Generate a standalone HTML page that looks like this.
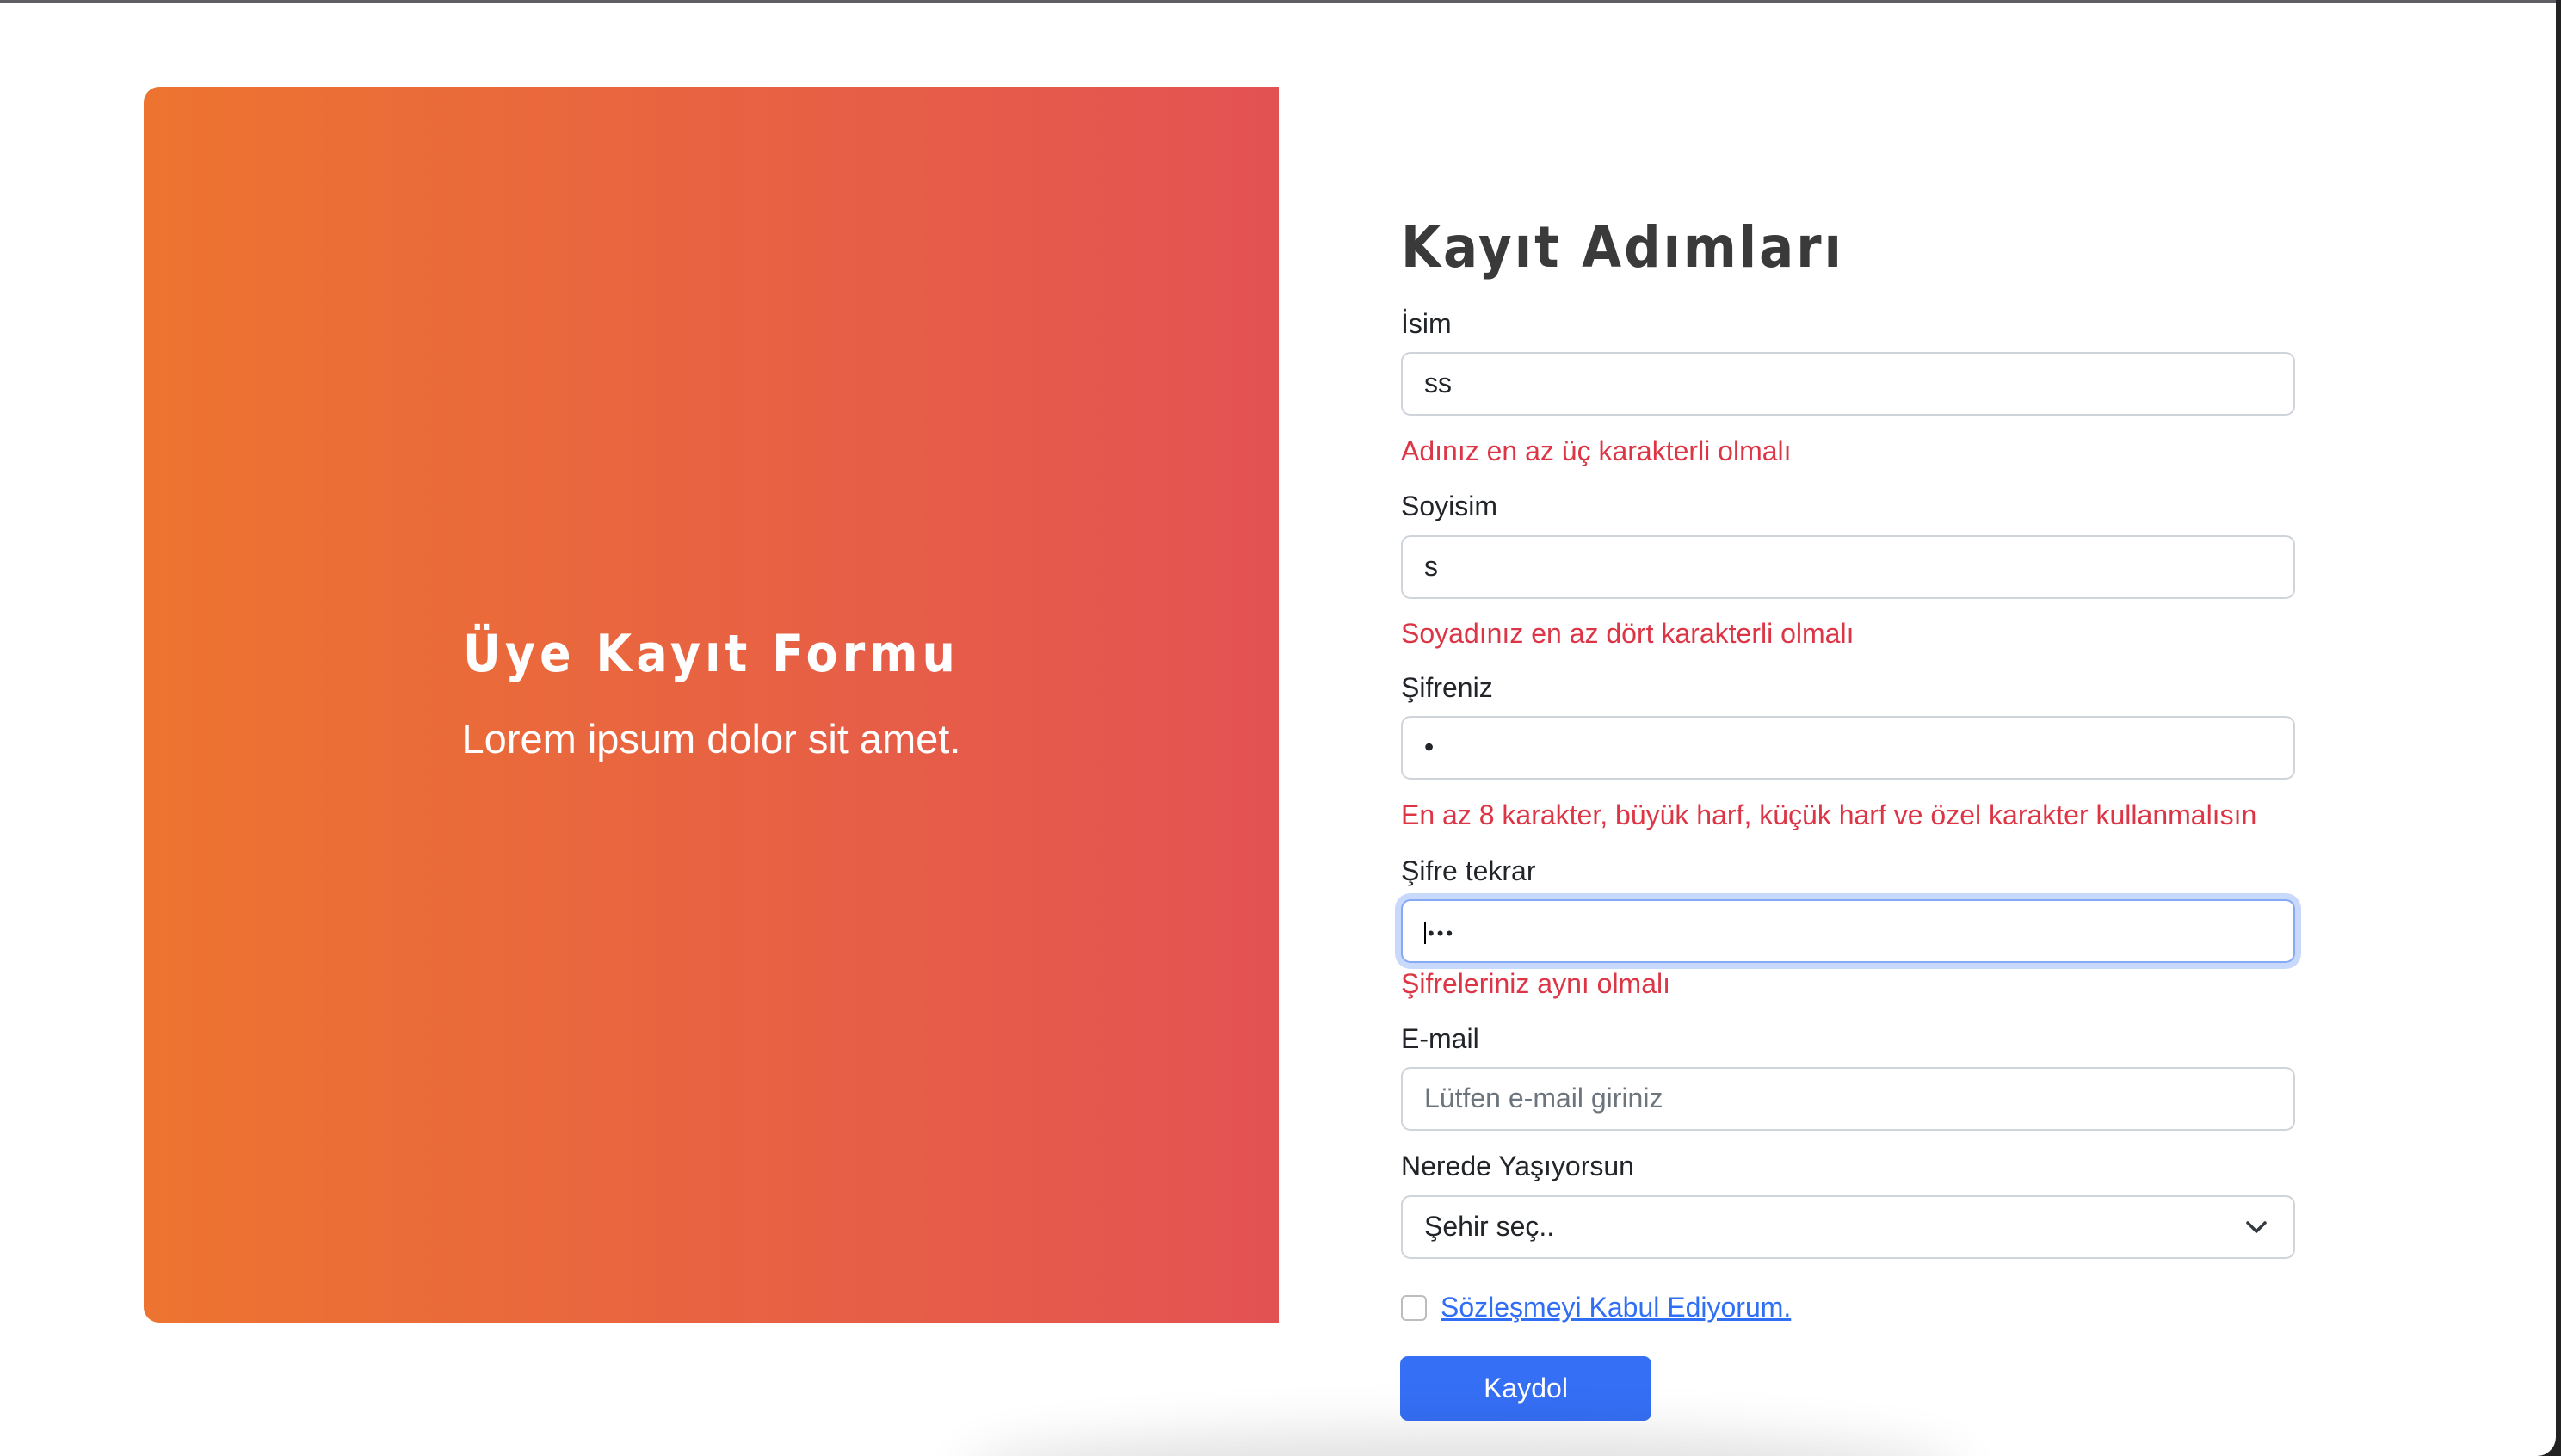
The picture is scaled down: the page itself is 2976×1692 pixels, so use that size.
<!DOCTYPE html>
<html><head><meta charset="utf-8"><style>
html,body{margin:0;padding:0;}
body{width:2976px;height:1692px;position:relative;overflow:hidden;background:#222;font-family:"Liberation Sans",sans-serif;}
#win{position:absolute;left:0;top:0;width:2970px;height:1692px;background:#fff;border-top:3px solid #5f5e63;box-sizing:border-box;border-bottom-right-radius:22px;overflow:hidden;}
.left{position:absolute;left:167px;top:98px;width:1319px;height:1436px;border-radius:18px 0 0 18px;background:linear-gradient(90deg,#ed7430,#e35253);}
.lt{position:absolute;left:0;width:100%;text-align:center;color:#fff;}
.a{position:absolute;}
.lbl{position:absolute;left:1628px;font-size:32px;color:#212529;line-height:36px;}
.err{position:absolute;left:1628px;font-size:32px;color:#dc3545;line-height:36px;}
.inp{position:absolute;left:1628px;width:1039px;height:74px;border:2px solid #ced4da;border-radius:11px;box-sizing:border-box;font-size:32px;color:#212529;padding-left:25px;line-height:68px;background:#fff;}
.title{position:absolute;left:1628px;top:246px;font-size:66px;font-weight:bold;color:#3a3a3a;letter-spacing:3px;font-family:"DejaVu Sans Condensed","DejaVu Sans",sans-serif;}
</style></head><body>
<div id="win">
<div class="left">
 <div class="lt" style="top:624px;font-size:60px;font-weight:bold;letter-spacing:5px;font-family:'DejaVu Sans Condensed','DejaVu Sans',sans-serif;">Üye Kayıt Formu</div>
 <div class="lt" style="top:730px;font-size:47px;">Lorem ipsum dolor sit amet.</div>
</div>
<div class="title">Kayıt Adımları</div>
<div class="lbl" style="top:355px">İsim</div>
<div class="inp" style="top:406px">ss</div>
<div class="err" style="top:503px">Adınız en az üç karakterli olmalı</div>
<div class="lbl" style="top:567px">Soyisim</div>
<div class="inp" style="top:619px">s</div>
<div class="err" style="top:715px">Soyadınız en az dört karakterli olmalı</div>
<div class="lbl" style="top:778px">Şifreniz</div>
<div class="inp" style="top:829px">•</div>
<div class="err" style="top:926px">En az 8 karakter, büyük harf, küçük harf ve özel karakter kullanmalısın</div>
<div class="lbl" style="top:991px">Şifre tekrar</div>
<div class="inp" style="top:1042px;border-color:#86a9f5;box-shadow:0 0 0 7px #c9d9fb;"><span style="border-left:2px solid #000;padding-left:2px;font-size:22px;letter-spacing:3px">•••</span></div>
<div class="err" style="top:1122px">Şifreleriniz aynı olmalı</div>
<div class="lbl" style="top:1186px">E-mail</div>
<div class="inp" style="top:1237px;color:#6c757d">Lütfen e-mail giriniz</div>
<div class="lbl" style="top:1334px">Nerede Yaşıyorsun</div>
<div class="inp" style="top:1386px">Şehir seç..
 <svg style="position:absolute;right:30px;top:26px" width="26" height="18" viewBox="0 0 26 18"><path d="M3 4 L13 14 L23 4" stroke="#343a40" stroke-width="3.5" fill="none" stroke-linecap="round" stroke-linejoin="round"/></svg></div>
<div class="a" style="left:1628px;top:1502px;width:30px;height:30px;border:2px solid #bdbdbd;border-radius:6px;box-sizing:border-box"></div>
<div class="a" style="left:1674px;top:1498px;font-size:32px;color:#2f6ef5;text-decoration:underline;line-height:36px">Sözleşmeyi Kabul Ediyorum.</div>
<div class="a" style="left:1627px;top:1573px;width:292px;height:75px;background:#356ff5;border-radius:9px;color:#fff;font-size:32px;text-align:center;line-height:75px">Kaydol</div>
<div class="a" style="left:1150px;top:1700px;width:1100px;height:40px;border-radius:50%;box-shadow:0 -10px 60px 30px rgba(0,0,0,0.12)"></div>
</div>
</body></html>
